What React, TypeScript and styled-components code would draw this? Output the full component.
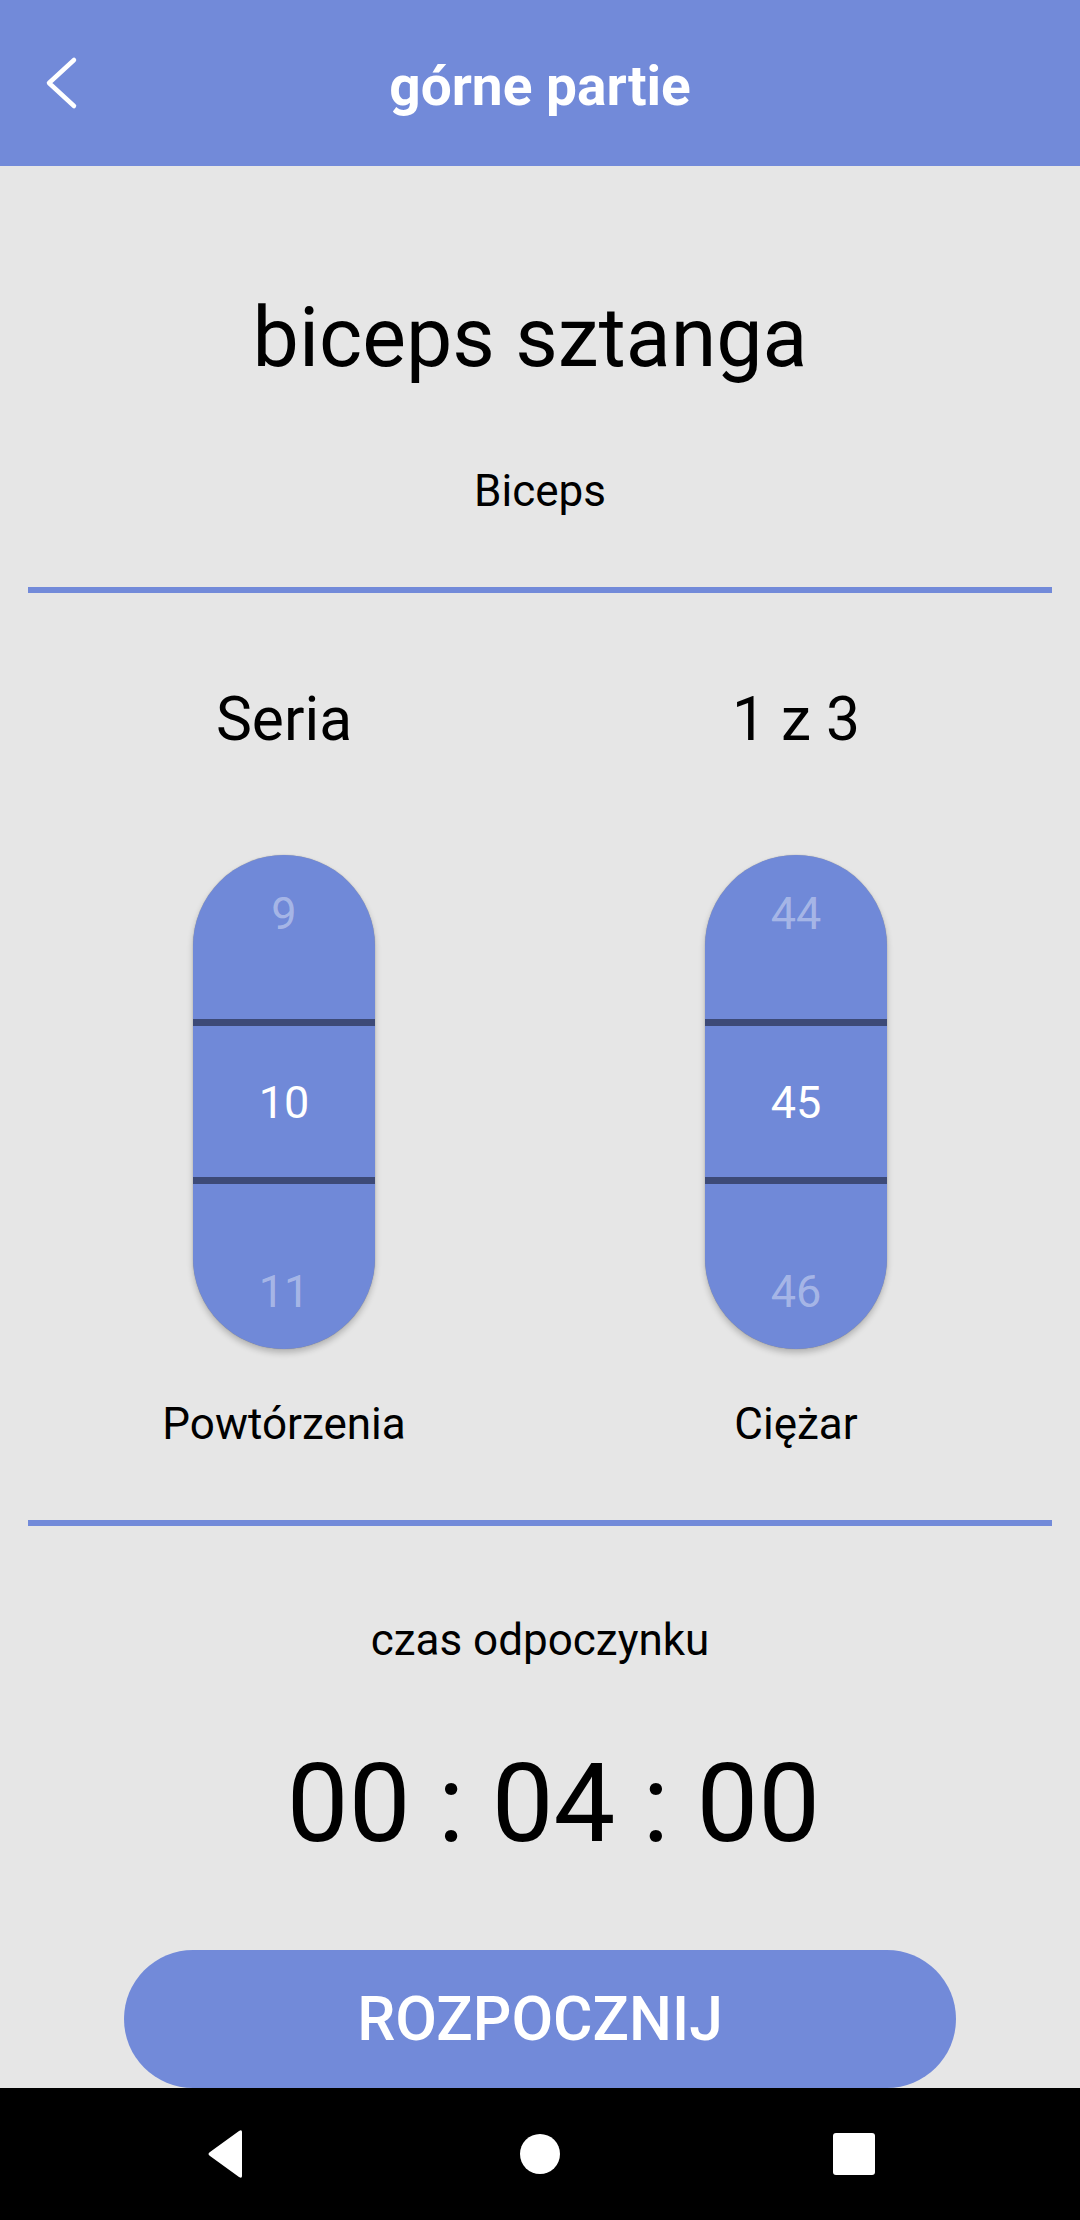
import styled, { createGlobalStyle } from 'styled-components';

const GlobalStyle = createGlobalStyle`
    html, body {
        margin: 0;
        padding: 0;
    }
    body {
        background: #e6e6e6;
        font-family: Roboto, "Noto Sans", "Liberation Sans", sans-serif;
    }
`;

const accent = '#728ad9';

const Screen = styled.div`
    width: 1080px;
    height: 2220px;
    display: flex;
    flex-direction: column;
    background: #e6e6e6;
    overflow: hidden;
`;

const Toolbar = styled.header`
    height: 166px;
    flex-shrink: 0;
    background: ${accent};
    display: grid;
    grid-template-columns: 1fr auto 1fr;
    align-items: center;
`;

const BackButton = styled.button`
    justify-self: start;
    margin-left: 40px;
    padding: 0;
    border: none;
    background: none;
    display: flex;
`;

const ToolbarTitle = styled.h1`
    margin: 0;
    padding-top: 6px;
    font-size: 55px;
    line-height: 66px;
    font-weight: 700;
    color: #fff;
`;

const Main = styled.main`
    flex: 1;
    display: flex;
    flex-direction: column;
    padding: 0 28px;
    color: #000;
    text-align: center;
`;

const ExerciseName = styled.h2`
    margin: 122px 0 0;
    padding-right: 20px;
    font-size: 82.5px;
    line-height: 100px;
    font-weight: 400;
`;

const MuscleGroup = styled.div`
    margin-top: 77px;
    font-size: 44px;
    line-height: 52px;
`;

const Divider = styled.hr`
    margin: 70px 0 0;
    height: 6px;
    border: none;
    background: ${accent};
`;

const Columns = styled.section`
    margin-top: 91px;
    display: grid;
    grid-template-columns: 1fr 1fr;
`;

const Column = styled.div`
    display: flex;
    flex-direction: column;
    align-items: center;
`;

const ColumnHeading = styled.div`
    font-size: 60.5px;
    line-height: 72px;
`;

const Picker = styled.div`
    position: relative;
    margin-top: 99px;
    width: 182px;
    height: 494px;
    border-radius: 91px;
    background: #7089d8;
    box-shadow: 0 4px 6px rgba(0, 0, 0, 0.22), 0 0 1px rgba(0, 0, 0, 0.35);
    overflow: hidden;
    display: flex;
    flex-direction: column;
    align-items: center;
    justify-content: center;
`;

const PickerItem = styled.div<{ $selected?: boolean }>`
    flex-shrink: 0;
    height: 189px;
    display: flex;
    align-items: center;
    font-size: 45px;
    color: ${(p) => (p.$selected ? '#fff' : 'rgba(255, 255, 255, 0.4)')};
`;

const SelectionBand = styled.div`
    position: absolute;
    left: 0;
    right: 0;
    top: 164px;
    height: 151px;
    border-top: 7px solid #3d4a77;
    border-bottom: 7px solid #3d4a77;
`;

const PickerLabel = styled.div`
    margin-top: 49px;
    font-size: 44px;
    line-height: 52px;
`;

const RestLabel = styled.div`
    margin-top: 88px;
    font-size: 44px;
    line-height: 52px;
`;

const Timer = styled.div`
    margin-top: 73px;
    padding-left: 27px;
    font-size: 110px;
    line-height: 130px;
`;

const StartButton = styled.button`
    margin-top: 81px;
    align-self: center;
    width: 832px;
    height: 138px;
    border: none;
    border-radius: 69px;
    background: ${accent};
    color: #fff;
    font-family: Roboto, "Noto Sans", sans-serif;
    font-size: 60.5px;
    font-weight: 500;
`;

const NavBar = styled.nav`
    height: 132px;
    flex-shrink: 0;
    background: #000;
    display: grid;
    grid-template-columns: repeat(3, 314px);
    justify-content: center;
    align-items: center;
    justify-items: center;
`;

interface WheelProps {
    heading: string;
    label: string;
    values: [number, number, number];
}

function Wheel({ heading, label, values }: WheelProps) {
    return (
        <Column>
            <ColumnHeading>{heading}</ColumnHeading>
            <Picker>
                <PickerItem>{values[0]}</PickerItem>
                <PickerItem $selected>{values[1]}</PickerItem>
                <PickerItem>{values[2]}</PickerItem>
                <SelectionBand />
            </Picker>
            <PickerLabel>{label}</PickerLabel>
        </Column>
    );
}

export default function App() {
    return (
        <Screen>
            <GlobalStyle />
            <Toolbar>
                <BackButton aria-label="Wstecz">
                    <svg width="40" height="60" viewBox="0 0 40 60">
                        <polyline
                            points="34,7 9,30 34,53"
                            fill="none"
                            stroke="#fff"
                            strokeWidth="4.5"
                            strokeLinecap="round"
                            strokeLinejoin="round"
                        />
                    </svg>
                </BackButton>
                <ToolbarTitle>górne partie</ToolbarTitle>
                <div />
            </Toolbar>
            <Main>
                <ExerciseName>biceps sztanga</ExerciseName>
                <MuscleGroup>Biceps</MuscleGroup>
                <Divider />
                <Columns>
                    <Wheel heading="Seria" label="Powtórzenia" values={[9, 10, 11]} />
                    <Wheel heading="1 z 3" label="Ciężar" values={[44, 45, 46]} />
                </Columns>
                <Divider />
                <RestLabel>czas odpoczynku</RestLabel>
                <Timer>00 : 04 : 00</Timer>
                <StartButton>ROZPOCZNIJ</StartButton>
            </Main>
            <NavBar>
                <svg width="44" height="50" viewBox="0 0 44 50">
                    <path d="M38 3 L38 47 Q38 50 35 48 L6 27 Q3 25 6 23 L35 2 Q38 0 38 3 Z" fill="#fff" />
                </svg>
                <svg width="40" height="40" viewBox="0 0 40 40">
                    <circle cx="20" cy="20" r="20" fill="#fff" />
                </svg>
                <svg width="42" height="42" viewBox="0 0 42 42">
                    <rect width="42" height="42" rx="3" fill="#fff" />
                </svg>
            </NavBar>
        </Screen>
    );
}
